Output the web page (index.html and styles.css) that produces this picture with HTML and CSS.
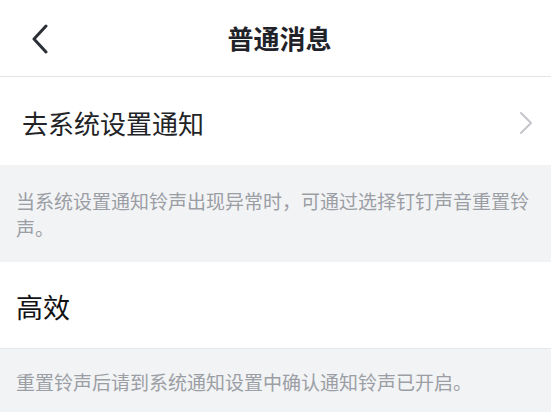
FILE: index.html
```html
<!DOCTYPE html>
<html lang="zh-CN">
<head>
<meta charset="utf-8">
<title>普通消息</title>
<link rel="stylesheet" href="styles.css">
</head>
<body>
<div class="page">
  <header class="nav">
    <svg class="back" width="18" height="30" viewBox="0 0 18 30"><path d="M15 2 L3 15 L15 28" fill="none" stroke="#2b2f36" stroke-width="3" stroke-linecap="round" stroke-linejoin="round"/></svg>
    <div class="title">普通消息</div>
  </header>
  <div class="row row-link">
    <span class="row-text">去系统设置通知</span>
    <svg class="arrow" width="14" height="24" viewBox="0 0 14 24"><path d="M2 2 L12 12 L2 22" fill="none" stroke="#c4c6ca" stroke-width="2" stroke-linecap="round" stroke-linejoin="round"/></svg>
  </div>
  <div class="note note-first">当系统设置通知铃声出现异常时，可通过选择钉钉声音重置铃声。</div>
  <div class="row row-plain">
    <span class="row-title">高效</span>
  </div>
  <div class="note note-last">重置铃声后请到系统通知设置中确认通知铃声已开启。</div>
</div>
</body>
</html>
```
FILE: styles.css
```css
html, body {
  margin: 0;
  padding: 0;
  background: #f2f3f5;
}
.page {
  width: 551px;
  height: 412px;
  overflow: hidden;
  font-family: "Noto Sans CJK SC", "Noto Sans", sans-serif;
  background: #f2f3f5;
}
.nav {
  height: 76px;
  background: #fff;
  border-bottom: 1px solid #e3e4e6;
  display: flex;
  align-items: center;
  justify-content: center;
  position: relative;
}
.back {
  position: absolute;
  left: 31px;
  top: 24px;
}
.title {
  font-size: 26px;
  font-weight: 700;
  color: #1f2329;
  line-height: 30px;
  margin-left: 8px;
}
.row {
  background: #fff;
  display: flex;
  align-items: center;
}
.row-link {
  height: 88px;
  box-sizing: border-box;
  padding: 4px 18px 0 22px;
  justify-content: space-between;
}
.row-text {
  font-size: 26px;
  color: #222326;
  line-height: 30px;
}
.arrow {
  margin-top: 0;
}
.note {
  color: #9b9ea4;
  font-size: 19px;
  line-height: 27px;
  padding: 0 16px;
}
.note-first {
  padding-top: 22px;
  height: 75px;
}
.row-plain {
  padding: 4px 16px 0;
  box-sizing: border-box;
  height: 87px;
  border-bottom: 1px solid #e6e7e9;
}
.row-title {
  font-size: 27px;
  color: #111214;
  line-height: 32px;
}
.note-last {
  padding-top: 19px;
}
```
